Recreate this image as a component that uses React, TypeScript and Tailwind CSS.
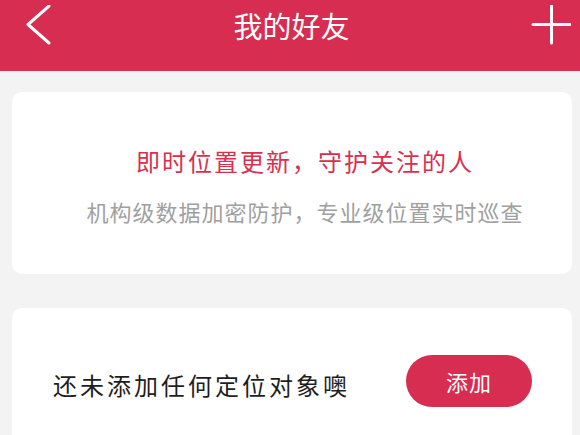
import React from "react";

export default function App() {
  const font = { fontFamily: '"Noto Sans CJK SC", "Noto Sans", sans-serif' };
  return (
    <div className="w-[580px] h-[435px] overflow-hidden bg-[#f3f3f3]" style={font}>
      <div className="h-[71px] bg-[#d62d50] flex items-start pt-[5px] pl-[26px] pr-[9px]">
        <svg width="26" height="40" viewBox="0 0 26 40" fill="none">
          <polyline points="23,1 2,19.5 23,38" stroke="white" strokeWidth="3" strokeLinecap="round" strokeLinejoin="round" />
        </svg>
        <div className="flex-1 text-center text-white text-[29px] leading-[29px] mt-[6px]">我的好友</div>
        <svg width="40" height="40" viewBox="0 0 40 40" fill="none">
          <line x1="2" y1="19.5" x2="39" y2="19.5" stroke="white" strokeWidth="3" strokeLinecap="round" />
          <line x1="20.5" y1="1" x2="20.5" y2="38" stroke="white" strokeWidth="3" strokeLinecap="round" />
        </svg>
      </div>
      <div className="pt-[21px] pl-[12px] pr-[8px] flex flex-col gap-[34px]">
        <div className="h-[182px] rounded-[10px] bg-white flex flex-col items-center pl-[26px] pt-[57px]">
          <div className="text-[24px] leading-[24px] tracking-[2px] text-[#d8304f]">即时位置更新，守护关注的人</div>
          <div className="mt-[27px] text-[22px] leading-[22px] tracking-[1px] text-[#a0a0a0]">机构级数据加密防护，专业级位置实时巡查</div>
        </div>
        <div className="h-[160px] rounded-[10px] bg-white flex items-start justify-between pl-[41px] pr-[40px] pt-[47px]">
          <div className="mt-[18px] text-[24px] leading-[24px] tracking-[3px] text-[#1e1e1e]">还未添加任何定位对象噢</div>
          <button className="w-[126px] h-[52px] rounded-full bg-[#d62d50] text-white text-[22px] leading-[22px] tracking-[1px]">添加</button>
        </div>
      </div>
    </div>
  );
}
